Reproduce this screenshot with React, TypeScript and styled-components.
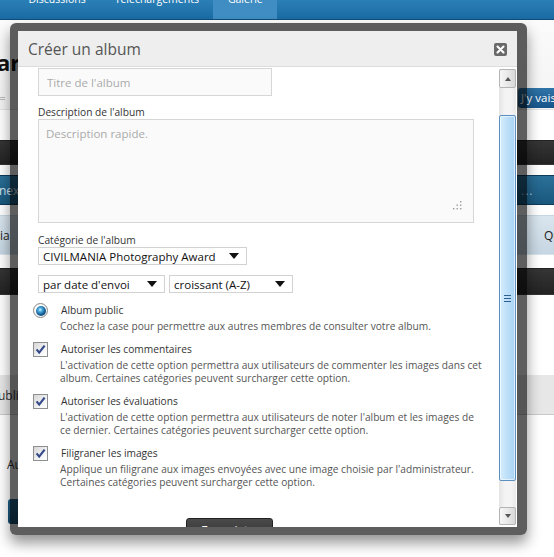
import React from "react";
import styled, { createGlobalStyle } from "styled-components";

const GlobalStyle = createGlobalStyle`
  html, body { margin: 0; padding: 0; }
  body {
    width: 554px;
    height: 557px;
    overflow: hidden;
    background: #fff;
    font-family: "Open Sans", "Noto Sans", sans-serif;
  }
  * { box-sizing: border-box; }
`;

/* ---------- background page ---------- */

const Page = styled.div`
  position: relative;
  width: 554px;
  height: 557px;
  overflow: hidden;
  background: #fff;
  display: flex;
  flex-direction: column;
`;

const Nav = styled.nav`
  flex: none;
  height: 20px;
  display: flex;
  padding-left: 14px;
  background: linear-gradient(#2b7fb7, #1a6ba3);
  border-bottom: 1px solid #0f4d78;
  overflow: hidden;
`;

const NavTab = styled.div<{ $active?: boolean }>`
  height: 100%;
  padding: 0 14.5px;
  font-size: 10.5px;
  line-height: 12px;
  color: #fff;
  background: ${(p) => (p.$active ? "#3f8dc2" : "transparent")};
  span {
    display: block;
    margin-top: -7px;
  }
`;

const Header = styled.header`
  flex: none;
  height: 90px;
  padding-top: 30px;
  display: flex;
  flex-direction: column;
  border-bottom: 1px solid #e4e4e4;
  background: linear-gradient(#fbfbfb, #f3f3f3);
`;

const PageTitle = styled.h1`
  margin: 0 0 0 -3px;
  font-size: 22px;
  line-height: 24px;
  font-weight: 700;
  color: #111;
`;

const ToolRow = styled.div`
  margin-top: 14px;
  height: 20px;
  display: flex;
  align-items: center;
  justify-content: space-between;
`;

const Crumb = styled.span`
  width: 5px;
  height: 3px;
  border-top: 1px solid #b8b8b8;
  border-bottom: 1px solid #b8b8b8;
`;

const GoButton = styled.span`
  width: 40px;
  height: 20px;
  margin-right: -4px;
  padding-left: 3px;
  border-radius: 3px;
  background: linear-gradient(#2f74a8, #17558a);
  color: #fff;
  font-size: 11.5px;
  line-height: 20px;
  white-space: nowrap;
`;

type Tone = "dark" | "blue" | "light" | "gray";
const tones: Record<Tone, { bg: string; fg: string; edge: string }> = {
  dark: { bg: "linear-gradient(#353535, #232323)", fg: "#eee", edge: "transparent" },
  blue: { bg: "linear-gradient(#2b7099, #1a587d)", fg: "#dbe8f2", edge: "#0e3b58" },
  light: { bg: "linear-gradient(#d9e5ee, #c6d6e2)", fg: "#222", edge: "transparent" },
  gray: { bg: "#e7e7e7", fg: "#333", edge: "transparent" },
};

const Band = styled.div<{ $tone: Tone; $h: number; $mt: number; $line?: boolean }>`
  flex: none;
  height: ${(p) => p.$h}px;
  margin-top: ${(p) => p.$mt}px;
  display: flex;
  align-items: center;
  font-size: 12px;
  white-space: nowrap;
  background: ${(p) => tones[p.$tone].bg};
  color: ${(p) => tones[p.$tone].fg};
  border-top: 1px solid ${(p) => tones[p.$tone].edge};
  border-bottom: 1px solid ${(p) => (p.$line ? "#c9c9c9" : tones[p.$tone].edge)};
`;

const BandLeft = styled.span<{ $shift: number }>`
  margin-left: ${(p) => p.$shift}px;
`;

const BandRight = styled.span<{ $w: number; $color?: string }>`
  margin-left: auto;
  width: ${(p) => p.$w}px;
  color: ${(p) => p.$color || "inherit"};
  letter-spacing: ${(p) => (p.$color ? "1px" : "0")};
`;

const FooterText = styled.div`
  flex: none;
  margin-top: 43px;
  padding-left: 7px;
  font-size: 12px;
  line-height: 14px;
  color: #333;
`;

const FooterBlock = styled.div`
  flex: none;
  margin: 27px 0 0 8px;
  width: 60px;
  height: 25px;
  border-radius: 3px;
  background: linear-gradient(#21638c, #174f73);
`;

/* ---------- modal ---------- */

const Frame = styled.div`
  position: absolute;
  left: 10px;
  top: 23px;
  width: 517px;
  height: 512px;
  padding: 8px 10px 8px 8px;
  border-radius: 6px;
  background: rgba(0, 0, 0, 0.63);
  box-shadow: 0 8px 14px rgba(0, 0, 0, 0.42);
`;

const Dialog = styled.div`
  height: 100%;
  display: flex;
  flex-direction: column;
  background: #fff;
`;

const TitleBar = styled.div`
  flex: none;
  height: 36px;
  padding: 0 10px;
  display: flex;
  align-items: center;
  justify-content: space-between;
  background: #eeeeee;
  border-bottom: 1px solid #dddddd;
`;

const DialogTitle = styled.h2`
  margin: 0;
  font-size: 15.5px;
  font-weight: 400;
  color: #555;
  line-height: 20px;
`;

const CloseButton = styled.button`
  width: 13px;
  height: 13px;
  margin-top: 2px;
  padding: 0;
  border: 0;
  border-radius: 2px;
  background: #6a6a6a;
  display: flex;
  align-items: center;
  justify-content: center;
`;

const Body = styled.div`
  flex: 1;
  min-height: 0;
  display: flex;
  overflow: hidden;
`;

const Content = styled.form`
  flex: 1;
  min-width: 0;
  padding: 1px 0 0 20px;
  overflow: hidden;
  font-size: 10.2px;
  color: #333;
`;

const TextInput = styled.input`
  display: block;
  width: 234px;
  height: 28px;
  margin: 0;
  padding: 0 8px;
  border: 1px solid #d6d6d6;
  background: #fafafa;
  font-family: inherit;
  font-size: 11.5px;
  outline: none;
  &::placeholder { color: #aaa; }
`;

const FieldLabel = styled.label<{ $mt: number }>`
  display: block;
  margin-top: ${(p) => p.$mt}px;
  line-height: 13px;
  color: #333;
`;

const AreaWrap = styled.div`
  position: relative;
  width: 436px;
  height: 104px;
`;

const TextArea = styled.textarea`
  display: block;
  width: 100%;
  height: 100%;
  margin: 0;
  padding: 6px 7px;
  resize: none;
  border: 1px solid #d6d6d6;
  background: #fafafa;
  font-family: inherit;
  font-size: 11.5px;
  outline: none;
  &::placeholder { color: #aaa; }
`;

const Grip = styled.svg`
  position: absolute;
  right: 12px;
  bottom: 12px;
`;

const SelectBox = styled.div<{ $w: number }>`
  width: ${(p) => p.$w}px;
  height: 18px;
  padding: 0 7px 0 4px;
  display: flex;
  align-items: center;
  justify-content: space-between;
  border: 1px solid #d2d2d2;
  background: #fff;
  font-size: 11.5px;
  color: #111;
  white-space: nowrap;
  &::after {
    content: "";
    border-left: 5px solid transparent;
    border-right: 5px solid transparent;
    border-top: 6px solid #111;
  }
`;

const SelectRow = styled.div`
  margin-top: 10px;
  display: flex;
  gap: 4px;
`;

const Options = styled.div`
  margin: 10px 0 0 -5px;
  display: flex;
  flex-direction: column;
  gap: 9px;
`;

const Option = styled.div`
  display: grid;
  grid-template-columns: 28px auto;
  row-gap: 2px;
  align-items: center;
`;

const Radio = styled.span`
  width: 15px;
  height: 15px;
  border-radius: 50%;
  border: 1px solid #8a8a8a;
  background: radial-gradient(circle, #fff 60%, #d4d4d4);
  display: flex;
  align-items: center;
  justify-content: center;
  &::after {
    content: "";
    width: 10px;
    height: 10px;
    border-radius: 50%;
    background: radial-gradient(circle at 42% 38%, #c6f0ff 0, #49a9dc 25%, #17609a 55%, #0a2a4d 100%);
  }
`;

const CheckBox = styled.span`
  width: 15px;
  height: 15px;
  border: 1px solid #8e8f8f;
  background: linear-gradient(135deg, #d6d6d6, #f7f7f7 70%, #fff);
  display: flex;
  align-items: center;
  justify-content: center;
`;

const OptionTitle = styled.span`
  line-height: 15px;
  color: #333;
  white-space: nowrap;
`;

const OptionDesc = styled.p`
  grid-column: 2;
  margin: 0 0 0 -1px;
  line-height: 13px;
  color: #555;
  white-space: nowrap;
`;

const Actions = styled.div`
  margin-top: 29px;
  padding-left: 148px;
  display: flex;
`;

const SaveButton = styled.button`
  width: 87px;
  height: 26px;
  padding: 4px 0 0 14px;
  border: 1px solid #222;
  border-radius: 3px 3px 0 0;
  background: linear-gradient(#4a4a4a, #2e2e2e);
  color: #fff;
  font-family: inherit;
  font-size: 12.5px;
  line-height: 16px;
  text-align: left;
  display: flex;
  align-items: flex-start;
`;

/* ---------- fake Windows 7 scrollbar ---------- */

const ScrollBar = styled.div`
  flex: none;
  width: 17px;
  margin: 2px 1px 2px 0;
  display: flex;
  flex-direction: column;
  background: linear-gradient(90deg, #e4e4e4, #f4f4f4 35%, #f4f4f4 70%, #e9e9e9);
`;

const ArrowButton = styled.div<{ $down?: boolean }>`
  flex: none;
  height: ${(p) => (p.$down ? 18 : 19)}px;
  border: 1px solid #b4b4b4;
  border-radius: 2px;
  background: linear-gradient(90deg, #f6f6f6, #e9e9e9 50%, #d8d8d8);
  display: flex;
  align-items: center;
  justify-content: center;
  &::after {
    content: "";
    border-left: 3.5px solid transparent;
    border-right: 3.5px solid transparent;
    ${(p) => (p.$down ? "border-top: 4px solid #555;" : "border-bottom: 4px solid #555;")}
  }
`;

const Track = styled.div`
  flex: 1;
  padding: 27px 0 26px;
  display: flex;
`;

const Thumb = styled.div`
  flex: 1;
  border: 1px solid #5b8fbf;
  border-radius: 2px;
  background: linear-gradient(90deg, #d6eefd, #bfe0f9 45%, #a9d4f5);
  box-shadow: inset 0 0 0 1px rgba(255, 255, 255, 0.55);
  display: flex;
  align-items: center;
  justify-content: center;
`;

const ThumbGrip = styled.span`
  width: 7px;
  height: 8px;
  background: repeating-linear-gradient(#2d5f8f 0 1px, transparent 1px 3px);
  margin-top: 1px;
`;

const Check = () => (
  <svg width="11" height="11" viewBox="0 0 11 11">
    <path d="M1.6 5.4 L4.2 8.6 L9.6 1.6" fill="none" stroke="#34498a" strokeWidth="2.2" strokeLinejoin="miter" />
  </svg>
);

const options = [
  {
    kind: "radio",
    title: "Album public",
    lines: ["Cochez la case pour permettre aux autres membres de consulter votre album."],
  },
  {
    kind: "check",
    title: "Autoriser les commentaires",
    lines: [
      "L'activation de cette option permettra aux utilisateurs de commenter les images dans cet",
      "album. Certaines catégories peuvent surcharger cette option.",
    ],
  },
  {
    kind: "check",
    title: "Autoriser les évaluations",
    lines: [
      "L'activation de cette option permettra aux utilisateurs de noter l'album et les images de",
      "ce dernier. Certaines catégories peuvent surcharger cette option.",
    ],
  },
  {
    kind: "check",
    title: "Filigraner les images",
    lines: [
      "Applique un filigrane aux images envoyées avec une image choisie par l'administrateur.",
      "Certaines catégories peuvent surcharger cette option.",
    ],
  },
];

export default function App() {
  return (
    <>
      <GlobalStyle />
      <Page>
        <Nav>
          <NavTab><span>Discussions</span></NavTab>
          <NavTab><span>Téléchargements</span></NavTab>
          <NavTab $active><span>Galerie</span></NavTab>
        </Nav>
        <Header>
          <PageTitle>ar</PageTitle>
          <ToolRow>
            <Crumb />
            <GoButton>J'y vais</GoButton>
          </ToolRow>
        </Header>
        <Band $tone="dark" $h={25} $mt={30} />
        <Band $tone="blue" $h={30} $mt={10}>
          <BandLeft $shift={-1}>nex</BandLeft>
          <BandRight $w={33} $color="#9fcbea">...</BandRight>
        </Band>
        <Band $tone="light" $h={40} $mt={10}>
          <BandLeft $shift={0}>ia</BandLeft>
          <BandRight $w={10}>Qu</BandRight>
        </Band>
        <Band $tone="dark" $h={27} $mt={13} />
        <Band $tone="gray" $h={40} $mt={80} $line>
          <BandLeft $shift={-2}>ublie</BandLeft>
        </Band>
        <FooterText>Au</FooterText>
        <FooterBlock />

        <Frame>
          <Dialog>
            <TitleBar>
              <DialogTitle>Créer un album</DialogTitle>
              <CloseButton type="button" aria-label="Fermer">
                <svg width="9" height="9" viewBox="0 0 9 9">
                  <path d="M1.5 1.5 L7.5 7.5 M7.5 1.5 L1.5 7.5" stroke="#fff" strokeWidth="2.1" strokeLinecap="round" />
                </svg>
              </CloseButton>
            </TitleBar>
            <Body>
              <Content onSubmit={(e) => e.preventDefault()}>
                <TextInput placeholder="Titre de l'album" readOnly />
                <FieldLabel $mt={10}>Description de l'album</FieldLabel>
                <AreaWrap>
                  <TextArea placeholder="Description rapide." readOnly />
                  <Grip width="10" height="10" viewBox="0 0 10 10">
                    <g fill="#9a9a9a">
                      <rect x="8" y="0" width="1.4" height="1.4" />
                      <rect x="4.5" y="3.5" width="1.4" height="1.4" />
                      <rect x="8" y="3.5" width="1.4" height="1.4" />
                      <rect x="1" y="7" width="1.4" height="1.4" />
                      <rect x="4.5" y="7" width="1.4" height="1.4" />
                      <rect x="8" y="7" width="1.4" height="1.4" />
                    </g>
                  </Grip>
                </AreaWrap>
                <FieldLabel $mt={11}>Catégorie de l'album</FieldLabel>
                <SelectBox $w={209}>CIVILMANIA Photography Award</SelectBox>
                <SelectRow>
                  <SelectBox $w={127}>par date d'envoi</SelectBox>
                  <SelectBox $w={124}>croissant (A-Z)</SelectBox>
                </SelectRow>
                <Options>
                  {options.map((o) => (
                    <Option key={o.title}>
                      {o.kind === "radio" ? (
                        <Radio />
                      ) : (
                        <CheckBox>
                          <Check />
                        </CheckBox>
                      )}
                      <OptionTitle>{o.title}</OptionTitle>
                      <OptionDesc>
                        {o.lines.map((l, i) => (
                          <React.Fragment key={i}>
                            {i > 0 && <br />}
                            {l}
                          </React.Fragment>
                        ))}
                      </OptionDesc>
                    </Option>
                  ))}
                </Options>
                <Actions>
                  <SaveButton type="submit">Enregistrer</SaveButton>
                </Actions>
              </Content>
              <ScrollBar>
                <ArrowButton />
                <Track>
                  <Thumb>
                    <ThumbGrip />
                  </Thumb>
                </Track>
                <ArrowButton $down />
              </ScrollBar>
            </Body>
          </Dialog>
        </Frame>
      </Page>
    </>
  );
}
